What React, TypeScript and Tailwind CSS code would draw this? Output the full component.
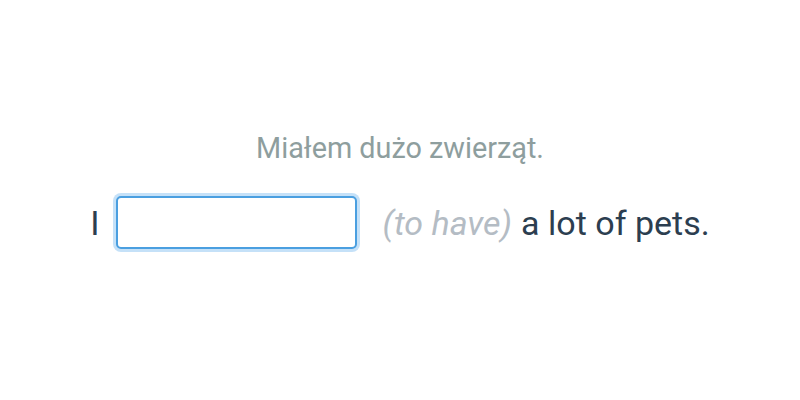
export default function App() {
  return (
    <div className="flex h-[400px] w-[800px] flex-col items-center bg-white pt-[130px] font-['Roboto',sans-serif]">
      <div className="text-[28.8px] leading-[36px] text-[#8e9e9e]">Miałem dużo zwierząt.</div>
      <div className="mt-[30px] flex items-center text-[34px] leading-[40px] text-[#2c3e50]">
        <span>I</span>
        <div className="ml-4 h-[53px] w-[241px] rounded-[5px] border-2 border-[#4a9fe0] bg-white shadow-[0_0_0_3px_#c5e1f8]"></div>
        <span className="ml-[26px] italic text-[#b4bcc4]">(to have)</span>
        <span className="ml-[9px]">a lot of pets.</span>
      </div>
    </div>
  );
}
